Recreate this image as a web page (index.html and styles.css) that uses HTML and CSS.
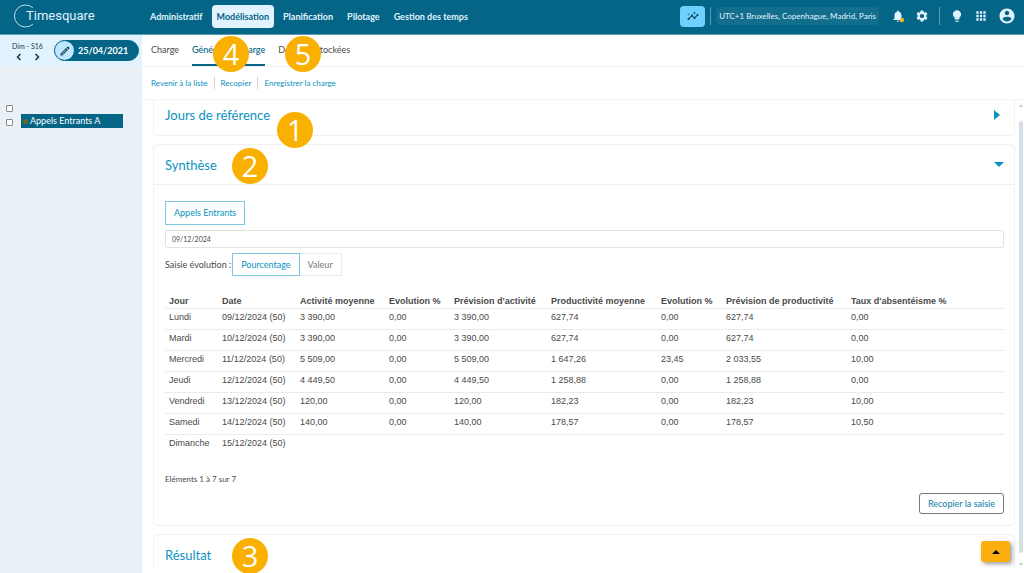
FILE: index.html
```
<!DOCTYPE html>
<html lang="fr">
<head>
    <meta charset="UTF-8">
    <title>Timesquare</title>
    <link rel="stylesheet" href="styles.css">
</head>
<body>
<header class="topbar">
    <a class="logo" href="#">
        <svg width="24" height="26" viewBox="0 0 24 26" fill="none" stroke="#b9dcea" stroke-width="1">
            <path d="M20 5A11 11 0 1 0 20 21"/>
        </svg>
        <span>Timesquare</span>
    </a>
    <nav class="menu">
        <a href="#">Administratif</a>
        <a href="#" class="current">Modélisation</a>
        <a href="#">Planification</a>
        <a href="#">Pilotage</a>
        <a href="#">Gestion des temps</a>
    </nav>
    <div class="tools">
        <button class="insight" aria-label="Analyse">
            <svg width="12" height="12" viewBox="0 0 24 24" fill="#0b3f55"><path d="M21 8c-1.450 0-2.260 1.440-1.930 2.510l-3.550 3.560c-.3-.09-.74-.09-1.040 0l-2.550-2.550C12.270 10.450 11.460 9 10 9c-1.450 0-2.270 1.440-1.930 2.520l-4.560 4.550C2.440 15.740 1 16.550 1 18c0 1.100.9 2 2 2 1.450 0 2.260-1.440 1.930-2.510l4.550-4.560c.3.090.74.090 1.040 0l2.550 2.550C12.730 16.550 13.540 18 15 18c1.450 0 2.270-1.440 1.930-2.520l3.560-3.550C21.560 12.260 23 11.450 23 10c0-1.100-.9-2-2-2zM15 9l.94-2.070L18 6l-2.060-.93L15 3l-.92 2.070L12 6l2.080.93zM3.500 11L4 9l2-.5L4 8l-.5-2L3 8l-2 .5L3 9z"/></svg>
        </button>
        <span class="sep"></span>
        <button class="zone">UTC+1 Bruxelles, Copenhague, Madrid, Paris</button>
        <div class="icons">
            <button aria-label="Notifications">
                <svg width="14" height="14" viewBox="0 0 24 24"><path fill="#e1f3ff" d="M12 22c1.100 0 2-.9 2-2h-4c0 1.100.89 2 2 2zm6-6v-5c0-3.070-1.640-5.640-4.500-6.320V4c0-.83-.67-1.500-1.500-1.500s-1.500.67-1.500 1.500v.68C7.630 5.360 6 7.920 6 11v5l-2 2v1h16v-1l-2-2z"/><circle cx="18.500" cy="19" r="3.800" fill="#f4b92e"/></svg>
            </button>
            <button aria-label="Paramètres">
                <svg width="14" height="14" viewBox="0 0 24 24" fill="#e1f3ff"><path d="M19.140 12.940c.04-.3.060-.61.060-.94 0-.32-.02-.64-.07-.94l2.030-1.580c.18-.14.23-.41.120-.61l-1.920-3.320c-.12-.22-.37-.29-.59-.22l-2.390.96c-.5-.38-1.030-.7-1.620-.94L14.400 2.810c-.04-.24-.24-.41-.48-.41h-3.840c-.24 0-.43.170-.47.410L9.250 5.350C8.660 5.590 8.120 5.920 7.630 6.290L5.240 5.330c-.22-.08-.47 0-.59.220L2.740 8.870c-.12.210-.08.470.120.610l2.030 1.580c-.05.300-.09.630-.09.940s.02.640.070.940l-2.030 1.580c-.18.140-.23.410-.12.610l1.920 3.320c.12.220.37.290.59.220l2.390-.96c.5.380 1.030.700 1.620.940l.36 2.540c.05.240.24.410.48.410h3.840c.24 0 .44-.17.470-.41l.36-2.540c.59-.24 1.130-.56 1.620-.94l2.390.96c.22.080.47 0 .59-.22l1.920-3.320c.12-.22.070-.47-.12-.61L19.140 12.940zM12 15.600c-1.980 0-3.600-1.620-3.600-3.600s1.620-3.600 3.600-3.600 3.600 1.620 3.600 3.600-1.620 3.600-3.600 3.600z"/></svg>
            </button>
        </div>
        <span class="sep"></span>
        <div class="icons">
            <button aria-label="Aide">
                <svg width="14" height="14" viewBox="0 0 24 24" fill="#e1f3ff"><path d="M9 21c0 .55.450 1 1 1h4c.55 0 1-.45 1-1v-1H9v1zm3-19C8.140 2 5 5.140 5 9c0 2.380 1.190 4.470 3 5.740V17c0 .55.450 1 1 1h6c.55 0 1-.45 1-1v-2.260c1.810-1.270 3-3.360 3-5.740 0-3.860-3.140-7-7-7z"/></svg>
            </button>
            <button aria-label="Applications">
                <svg width="14" height="14" viewBox="0 0 24 24" fill="#e1f3ff"><path d="M4 8h4V4H4v4zm6 12h4v-4h-4v4zm-6 0h4v-4H4v4zm0-6h4v-4H4v4zm6 0h4v-4h-4v4zm6-10v4h4V4h-4zm-6 4h4V4h-4v4zm6 6h4v-4h-4v4zm0 6h4v-4h-4v4z"/></svg>
            </button>
            <button aria-label="Mon compte">
                <svg width="18" height="18" viewBox="0 0 24 24" fill="#e1f3ff"><path d="M12 2C6.480 2 2 6.480 2 12s4.480 10 10 10 10-4.480 10-10S17.520 2 12 2zm0 3c1.660 0 3 1.340 3 3s-1.340 3-3 3-3-1.340-3-3 1.340-3 3-3zm0 14.200c-2.500 0-4.710-1.280-6-3.220.03-1.990 4-3.080 6-3.080 1.990 0 5.970 1.090 6 3.080-1.290 1.940-3.500 3.220-6 3.220z"/></svg>
            </button>
        </div>
    </div>
</header>
<div class="page">
    <aside class="side">
        <div class="period">
            <div class="week">
                <span>Dim - S16</span>
                <div class="arrows">
                    <button aria-label="Précédent"><svg width="6" height="8" viewBox="0 0 6 8"><path d="M4.500 1L1.500 4l3 3"/></svg></button>
                    <button aria-label="Suivant"><svg width="6" height="8" viewBox="0 0 6 8"><path d="M1.500 1l3 3-3 3"/></svg></button>
                </div>
            </div>
            <button class="date">
                <span class="pen"><svg width="12" height="12" viewBox="0 0 24 24" fill="#12394a"><path d="M14.060 9.020l.92.920L5.920 19H5v-.92l9.060-9.060M17.660 3c-.25 0-.51.100-.7.290l-1.830 1.830 3.750 3.750 1.830-1.830c.39-.39.390-1.020 0-1.410l-2.340-2.340c-.2-.2-.45-.29-.71-.29zm-3.600 3.190L3 17.250V21h3.750L17.810 9.940l-3.750-3.750z"/></svg></span>
                <span>25/04/2021</span>
            </button>
        </div>
        <ul class="tree">
            <li><input type="checkbox" aria-label="Tout sélectionner"></li>
            <li><input type="checkbox" id="queue"><label for="queue">Appels Entrants A</label></li>
        </ul>
    </aside>
    <main class="main">
        <nav class="tabs">
            <a href="#">Charge</a>
            <a href="#" class="current">Génération charge</a>
            <a href="#">Données stockées</a>
        </nav>
        <nav class="actions">
            <a href="#">Revenir à la liste</a>
            <a href="#">Recopier</a>
            <a href="#">Enregistrer la charge</a>
        </nav>
        <div class="scroll">
            <div class="cards">
                <section class="card card-first">
                    <h2>Jours de référence <svg class="mark" width="6" height="10" viewBox="0 0 6 10"><path d="M0 0l6 5-6 5z"/></svg></h2>
                </section>
                <section class="card">
                    <h2>Synthèse <svg class="mark" width="10" height="5" viewBox="0 0 10 5"><path d="M0 0h10L5 5z"/></svg></h2>
                    <div class="content">
                        <button class="tag">Appels Entrants</button>
                        <input class="day" type="text" value="09/12/2024" aria-label="Date">
                        <div class="entry">
                            <span>Saisie évolution :</span>
                            <button class="on">Pourcentage</button>
                            <button>Valeur</button>
                        </div>
                        <table>
                            <colgroup>
                                <col class="c-day"><col class="c-date"><col class="c-act"><col class="c-evo"><col class="c-pact"><col class="c-prod"><col class="c-evo"><col class="c-pprod"><col>
                            </colgroup>
                            <thead>
                            <tr><th>Jour</th><th>Date</th><th>Activité moyenne</th><th>Evolution %</th><th>Prévision d'activité</th><th>Productivité moyenne</th><th>Evolution %</th><th>Prévision de productivité</th><th>Taux d'absentéisme %</th></tr>
                            </thead>
                            <tbody>
                            <tr><td>Lundi</td><td>09/12/2024 (50)</td><td>3 390,00</td><td>0,00</td><td>3 390,00</td><td>627,74</td><td>0,00</td><td>627,74</td><td>0,00</td></tr>
                            <tr><td>Mardi</td><td>10/12/2024 (50)</td><td>3 390,00</td><td>0,00</td><td>3 390,00</td><td>627,74</td><td>0,00</td><td>627,74</td><td>0,00</td></tr>
                            <tr><td>Mercredi</td><td>11/12/2024 (50)</td><td>5 509,00</td><td>0,00</td><td>5 509,00</td><td>1 647,26</td><td>23,45</td><td>2 033,55</td><td>10,00</td></tr>
                            <tr><td>Jeudi</td><td>12/12/2024 (50)</td><td>4 449,50</td><td>0,00</td><td>4 449,50</td><td>1 258,88</td><td>0,00</td><td>1 258,88</td><td>0,00</td></tr>
                            <tr><td>Vendredi</td><td>13/12/2024 (50)</td><td>120,00</td><td>0,00</td><td>120,00</td><td>182,23</td><td>0,00</td><td>182,23</td><td>10,00</td></tr>
                            <tr><td>Samedi</td><td>14/12/2024 (50)</td><td>140,00</td><td>0,00</td><td>140,00</td><td>178,57</td><td>0,00</td><td>178,57</td><td>10,50</td></tr>
                            <tr><td>Dimanche</td><td>15/12/2024 (50)</td><td></td><td></td><td></td><td></td><td></td><td></td><td></td></tr>
                            </tbody>
                        </table>
                        <p class="count">Eléments 1 à 7 sur 7</p>
                        <button class="copy">Recopier la saisie</button>
                    </div>
                </section>
                <section class="card">
                    <h2>Résultat</h2>
                </section>
            </div>
            <div class="bar">
                <svg width="4" height="3" viewBox="0 0 4 3"><path d="M0 3l2-3 2 3z"/></svg>
                <div class="thumb"></div>
                <svg width="4" height="3" viewBox="0 0 4 3"><path d="M0 0l2 3 2-3z"/></svg>
            </div>
        </div>
    </main>
</div>
<button class="top" aria-label="Haut de page"><svg width="8" height="4" viewBox="0 0 8 4"><path d="M0 4l4-4 4 4z"/></svg></button>
<span class="step step1">1</span>
<span class="step step2">2</span>
<span class="step step3">3</span>
<span class="step step4">4</span>
<span class="step step5">5</span>
</body>
</html>
```
FILE: styles.css
```
* {
    box-sizing: border-box;
    margin: 0;
    padding: 0;
}

body {
    display: flex;
    flex-direction: column;
    height: 100vh;
    overflow: hidden;
    position: relative;
    background: #fff;
    color: #4a4a4a;
    font: 9px/12px Lato, sans-serif;
}

a {
    color: inherit;
    text-decoration: none;
}

button {
    border: 0;
    background: none;
    color: inherit;
    font: inherit;
    white-space: nowrap;
    cursor: pointer;
}

svg {
    display: block;
    flex: none;
}

/* top bar */
.topbar {
    display: flex;
    align-items: center;
    height: 35px;
    flex: none;
    padding: 0 8px 2px 13px;
    background: #046587;
    border-bottom: 1px solid #5a9db5;
    color: #e1f3ff;
}

.logo {
    display: flex;
    align-items: center;
    width: 132px;
    font: 13px/20px Roboto, sans-serif;
}

.logo span {
    margin-left: -11px;
}

.menu {
    display: flex;
    gap: 4px;
    font-size: 9px;
    font-weight: bold;
}

.menu a {
    padding: 5px;
    line-height: 13px;
    border-radius: 4px;
}

.menu .current {
    background: #e1f3ff;
    color: #046587;
}

.tools {
    display: flex;
    align-items: center;
    margin-left: auto;
}

.insight {
    display: flex;
    align-items: center;
    justify-content: center;
    width: 25px;
    height: 21px;
    border-radius: 4px;
    background: #6dd0ff;
}

.sep {
    width: 1px;
    height: 18px;
    margin: 0 5px;
    background: #5a9db5;
}

.zone {
    height: 18px;
    padding: 0 3px;
    border-radius: 4px;
    background: #136e8e;
    font-size: 8px;
}

.icons {
    display: flex;
    align-items: center;
    gap: 10px;
    padding: 0 5px 0 12px;
}

.icons:last-child {
    padding: 0 0 0 5px;
}

/* left column */
.page {
    display: flex;
    flex: 1;
    min-height: 0;
}

.side {
    width: 142px;
    flex: none;
    background: #e9f0f6;
}

.period {
    display: flex;
    align-items: center;
    gap: 10px;
    height: 31px;
    padding: 0 3px 0 12px;
    background: #e1f3ff;
    color: #12394a;
}

.week {
    width: 32px;
    font-size: 7px;
    line-height: 10px;
    white-space: nowrap;
}

.arrows {
    display: flex;
    justify-content: space-between;
    padding: 2px 4px 0;
}

.arrows path {
    fill: none;
    stroke: #12394a;
    stroke-width: 1.5;
}

.date {
    display: flex;
    align-items: center;
    gap: 4px;
    flex: 1;
    height: 21px;
    border: 1px solid #046587;
    border-radius: 11px;
    background: #046587;
    color: #fff;
    font-weight: bold;
}

.pen {
    display: flex;
    align-items: center;
    justify-content: center;
    width: 19px;
    height: 19px;
    border-radius: 50%;
    background: #bfe6ff;
}

.tree {
    padding: 34px 19px 0 6px;
    list-style: none;
}

.tree li {
    display: flex;
    align-items: flex-end;
    gap: 8px;
    height: 14px;
}

.tree input {
    appearance: none;
    width: 7px;
    height: 7px;
    margin-bottom: 2px;
    border: 1px solid #8a8a8a;
    border-radius: 1px;
    background: #fff;
}

.tree label {
    display: flex;
    align-items: center;
    gap: 2px;
    flex: 1;
    height: 14px;
    padding-left: 2px;
    background: #046587;
    color: #fff;
}

.tree label::before {
    content: "";
    width: 5px;
    height: 5px;
    border-radius: 50%;
    background: #6b6a1c;
}

/* tabs and links */
.main {
    display: flex;
    flex: 1;
    flex-direction: column;
    min-width: 0;
}

.tabs {
    display: flex;
    gap: 13px;
    height: 32px;
    flex: none;
    padding-left: 9px;
    border-bottom: 1px solid #f0f0f0;
    line-height: 29px;
}

.tabs .current {
    border-bottom: 2px solid #046587;
    color: #046587;
    font-weight: 500;
}

.actions {
    display: flex;
    align-items: center;
    height: 33px;
    flex: none;
    padding-left: 9px;
    border-bottom: 1px solid #f4f4f4;
    color: #0a93c0;
    font-size: 8px;
}

.actions a + a {
    margin-left: 6px;
    padding-left: 6px;
    border-left: 1px solid #d4d4d4;
}

/* cards */
.scroll {
    display: flex;
    flex: 1;
    min-height: 0;
    margin-bottom: 5px;
    overflow: hidden;
}

.cards {
    flex: 1;
    min-width: 0;
    padding: 0 3px 0 11px;
}

.card {
    margin-bottom: 8px;
    border: 1px solid #f0f0f0;
    border-radius: 5px;
}

.card h2 {
    display: flex;
    align-items: center;
    justify-content: space-between;
    height: 39px;
    padding: 0 10px 0 11px;
    color: #0a93c0;
    font-size: 13px;
    font-weight: normal;
}

.card-first {
    border-top: 0;
    border-radius: 0 0 5px 5px;
}

.card-first h2 {
    height: 35px;
    padding: 0 14px 5px 11px;
}

.mark {
    fill: #0a93c0;
}

.content {
    display: flex;
    flex-direction: column;
    align-items: flex-start;
    padding: 16px 10px 11px 11px;
    border-top: 1px solid #f0f0f0;
}

.tag {
    height: 24px;
    padding: 0 8px;
    border: 1px solid #7cc8e2;
    color: #0a93c0;
}

.day {
    width: 100%;
    height: 18px;
    margin: 5px 0;
    padding: 0 6px;
    border: 1px solid #e3e3e3;
    border-radius: 2px;
    color: #4a4a4a;
    font: 7px Lato, sans-serif;
}

.entry {
    display: flex;
    align-items: center;
}

.entry span {
    margin-right: 1px;
}

.entry button {
    height: 23px;
    padding: 0 8px;
    border: 1px solid #e8ecef;
    border-left: 0;
    color: #777;
}

.entry .on {
    border: 1px solid #7cc8e2;
    color: #0a93c0;
}

table {
    width: 100%;
    margin-top: 18px;
    border-collapse: collapse;
    table-layout: fixed;
    font-family: "Liberation Sans", Arial, sans-serif;
}

th,
td {
    height: 21px;
    padding: 0 0 3px 4px;
    text-align: left;
    white-space: nowrap;
}

th {
    height: 14px;
    padding: 0 0 0 4px;
}

tbody tr {
    border-top: 1px solid #ebebeb;
}

.c-day { width: 53px; }
.c-date { width: 78px; }
.c-act { width: 89px; }
.c-evo { width: 65px; }
.c-pact { width: 97px; }
.c-prod { width: 110px; }
.c-pprod { width: 125px; }

.count {
    margin-top: 18px;
    font-size: 8px;
}

.copy {
    align-self: flex-end;
    height: 21px;
    margin-top: 8px;
    padding: 0 8px;
    border: 1px solid #777;
    border-radius: 3px;
    color: #0a7ea6;
}

/* scroll bar */
.bar {
    display: flex;
    flex-direction: column;
    align-items: center;
    gap: 4px;
    width: 6px;
    padding: 4px 0 2px;
}

.bar svg {
    fill: #c5ced6;
}

.thumb {
    flex: 1;
    width: 4px;
    margin: 10px 0 6px;
    border-radius: 2px;
    background: #d6dee5;
}

.top {
    display: flex;
    align-items: center;
    justify-content: center;
    position: absolute;
    right: 14px;
    bottom: 11px;
    width: 29px;
    height: 21px;
    border-radius: 3px;
    background: #fbb010;
    box-shadow: 2px 2px 4px #999;
}

/* numbered marks over the page */
.step {
    position: absolute;
    width: 36px;
    height: 36px;
    border-radius: 50%;
    background: #f9b000;
    color: #fff;
    font: 29px/36px "Open Sans", sans-serif;
    text-align: center;
}

.step1 { left: 277px; top: 112px; }
.step2 { left: 232px; top: 148px; }
.step3 { left: 232px; top: 538px; }
.step4 { left: 213px; top: 36px; }
.step5 { left: 285px; top: 36px; }
```
